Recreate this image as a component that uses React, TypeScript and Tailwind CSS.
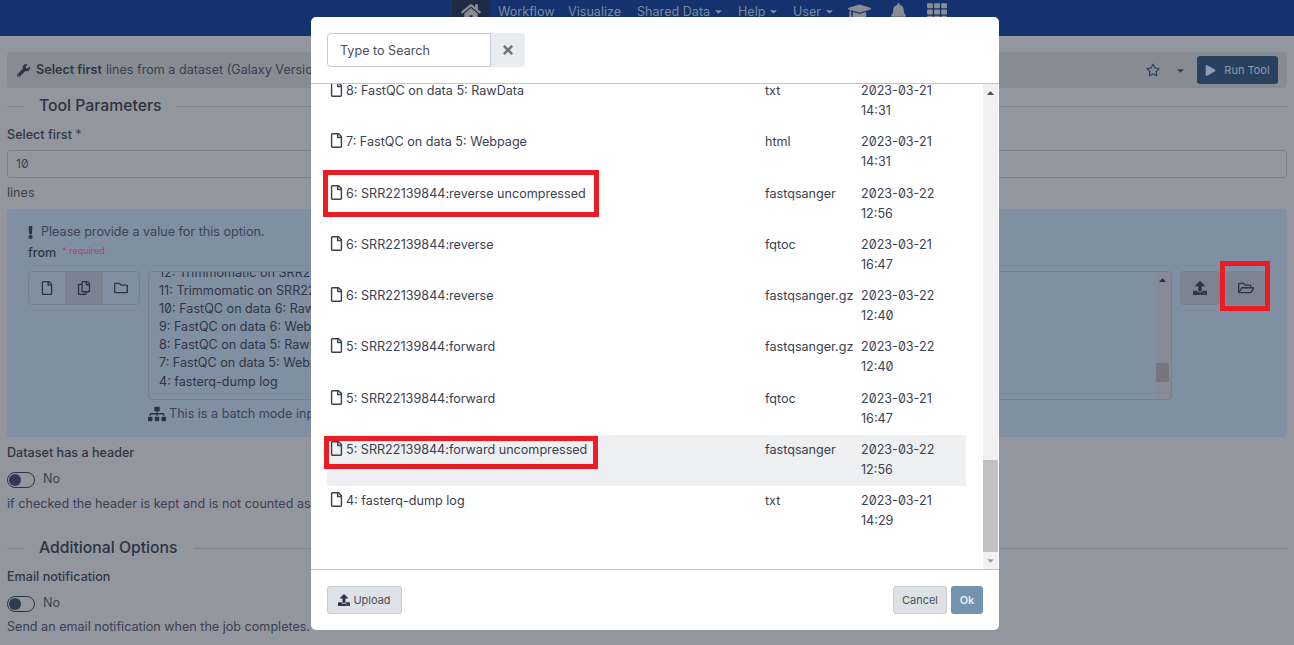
import React from 'react';
import {
    FaBell, FaCaretDown, FaExclamation, FaGraduationCap, FaHome, FaPlay, FaRegCopy, FaRegFile,
    FaRegFolder, FaRegFolderOpen, FaRegStar, FaSitemap, FaTh, FaTimes, FaUpload, FaWrench,
} from 'react-icons/fa';

const rows = [
    { name: '8: FastQC on data 5: RawData', format: 'txt', date: '2023-03-21 14:31' },
    { name: '7: FastQC on data 5: Webpage', format: 'html', date: '2023-03-21 14:31' },
    { name: '6: SRR22139844:reverse uncompressed', format: 'fastqsanger', date: '2023-03-22 12:56' },
    { name: '6: SRR22139844:reverse', format: 'fqtoc', date: '2023-03-21 16:47' },
    { name: '6: SRR22139844:reverse', format: 'fastqsanger.gz', date: '2023-03-22 12:40' },
    { name: '5: SRR22139844:forward', format: 'fastqsanger.gz', date: '2023-03-22 12:40' },
    { name: '5: SRR22139844:forward', format: 'fqtoc', date: '2023-03-21 16:47' },
    { name: '5: SRR22139844:forward uncompressed', format: 'fastqsanger', date: '2023-03-22 12:56', active: true },
    { name: '4: fasterq-dump log', format: 'txt', date: '2023-03-21 14:29' },
];

const batchLines = [
    '12: Trimmomatic on SRR22139844',
    '11: Trimmomatic on SRR22139844',
    '10: FastQC on data 6: RawData',
    '9: FastQC on data 6: Webpage',
    '8: FastQC on data 5: RawData',
    '7: FastQC on data 5: Webpage',
    '4: fasterq-dump log',
];

function NavCaret({ label }: { label: string }) {
    return (
        <span className="flex items-center gap-[3px]">
            {label}
            <FaCaretDown size={11} />
        </span>
    );
}

function SectionTitle({ title }: { title: string }) {
    return (
        <div className="flex items-center h-[24px]">
            <div className="w-[16px] h-px bg-[#7f8290]" />
            <h2 className="mx-[16px] text-[15.75px] font-medium text-[#2b3442]">{title}</h2>
            <div className="flex-1 h-px bg-[#7f8290]" />
        </div>
    );
}

function Toggle() {
    return (
        <div className="flex items-center gap-[8px] h-[16px]">
            <div className="w-[28px] h-[16px] rounded-full border border-[#2b3442] p-[1px]">
                <div className="w-[12px] h-[12px] rounded-full bg-[#2f3a50]" />
            </div>
            <span className="text-[#3a3f52] -mt-[2px]">No</span>
        </div>
    );
}

export default function App() {
    return (
        <div className="relative h-[645px] overflow-hidden bg-[#94969f] slashed-zero text-[12.6px] leading-[20px] text-[#2f3645] font-['Inter',sans-serif]">
            {/* Masthead, sits under the modal */}
            <div className="flex h-[36px] bg-[#14326e] pl-[452px] text-[#7f8a9f]">
                <div className="flex w-[38px] h-[17px] justify-center bg-[#1f2b44] pt-[2px] text-[#8a8c92]">
                    <FaHome size={20} className="shrink-0" />
                </div>
                <div className="flex h-[17px] items-center pl-[8px] pt-[6px]">
                    <span className="w-[70px]">Workflow</span>
                    <span className="w-[69px]">Visualize</span>
                    <span className="w-[101px]"><NavCaret label="Shared Data" /></span>
                    <span className="w-[55px]"><NavCaret label="Help" /></span>
                    <span className="w-[55px]"><NavCaret label="User" /></span>
                    <FaGraduationCap size={23} className="mr-[19px] shrink-0 text-[#8a8c92]" />
                    <FaBell size={17} className="mr-[20px] shrink-0 text-[#8a8c92]" />
                    <FaTh size={20} className="shrink-0 text-[#8a8c92]" />
                </div>
            </div>

            <div className="px-[7px] pt-[16px]">
                {/* Tool header */}
                <div className="flex h-[36px] items-center rounded-[4px] bg-[#878b94] pl-[10px] pr-[9px]">
                    <FaWrench size={13} className="mr-[6px] text-[#2b3442]" />
                    <b className="font-semibold mr-[4px]">Select first</b>
                    <span className="text-[#3a3f52]">lines from a dataset (Galaxy Version 1.0.2)</span>
                    <div className="flex-1" />
                    <FaRegStar size={14} className="text-[#29415f]" />
                    <FaCaretDown size={11} className="ml-[15px] mr-[11px] text-[#29415f]" />
                    <div className="flex h-[28px] w-[81px] items-center justify-center gap-[8px] rounded-[3px] bg-[#29415f] text-[11px] text-[#8f9bb0]">
                        <FaPlay size={11} />
                        Run Tool
                    </div>
                </div>

                <div className="mt-[6px]"><SectionTitle title="Tool Parameters" /></div>

                <div className="mt-[7px] font-medium">Select first <span className="text-[#3a3f52] font-normal">*</span></div>
                <div className="mt-[5px] flex h-[28px] items-center rounded-[3px] border border-[#7b7e90] px-[8px] text-[12px] text-[#3a3f52]">10</div>
                <div className="mt-[5px] text-[#3a3f52]">lines</div>

                {/* Input dataset block */}
                <div className="mt-[6px] h-[228px] rounded-[4px] bg-[#818fa2] px-[21px] pt-[13px]">
                    <div className="flex items-center text-[#3a4458]">
                        <FaExclamation size={13} className="-ml-[4px] mr-[4px] text-[#2b3442]" />
                        Please provide a value for this option.
                    </div>
                    <div className="-mt-px flex items-center">
                        <span className="font-medium">from</span>
                        <span className="ml-[6px] pb-[3px] text-[9px] text-[#a04a60]">* required</span>
                    </div>
                    <div className="mt-[7px] flex items-start gap-[8px]">
                        <div className="flex h-[34px] w-[112px] rounded-[4px] border border-[#757f92] text-[#2b3442]">
                            <div className="flex flex-1 items-center justify-center"><FaRegFile size={14} /></div>
                            <div className="flex flex-1 items-center justify-center border-x border-[#757f92] bg-[#7b8392]"><FaRegCopy size={14} /></div>
                            <div className="flex flex-1 items-center justify-center"><FaRegFolder size={14} /></div>
                        </div>
                        <div className="flex flex-1 flex-col">
                            <div className="relative h-[129px] overflow-hidden rounded-[4px] border border-[#757f92] pl-[10px] text-[#2f3645] leading-[18.1px]">
                                <div className="-mt-[8px] flex flex-col">
                                    {batchLines.map((line, i) => <span key={i}>{line}</span>)}
                                </div>
                                <div className="absolute right-0 top-0 flex h-full w-[17px] flex-col items-center bg-[#878b97]">
                                    <FaCaretDown size={11} className="mt-[3px] rotate-180 text-[#2b3442]" />
                                    <div className="mt-[77px] h-[19px] w-[13px] bg-[#747682]" />
                                </div>
                            </div>
                            <div className="mt-[4px] flex items-center gap-[3px] text-[#3a4458]">
                                <FaSitemap size={18} className="text-[#2b3442]" />
                                This is a batch mode input field. Separate jobs will be triggered for each dataset selection.
                            </div>
                        </div>
                        <div className="flex gap-[6px]">
                            <div className="flex h-[34px] w-[40px] items-center justify-center rounded-[4px] border border-[#757f92] bg-[#7c8492] text-[#2b3442]"><FaUpload size={14} /></div>
                            <div className="flex h-[34px] w-[40px] items-center justify-center rounded-[4px] bg-[#7c8492] text-[#2b3442]"><FaRegFolderOpen size={16} /></div>
                        </div>
                    </div>
                </div>

                <div className="mt-[6px] font-medium">Dataset has a header</div>
                <div className="mt-[9px]"><Toggle /></div>
                <div className="mt-[6px] text-[#3a3f52]">if checked the header is kept and is not counted as a line</div>

                <div className="mt-[22px]"><SectionTitle title="Additional Options" /></div>

                <div className="mt-[7px] font-medium">Email notification</div>
                <div className="mt-[9px]"><Toggle /></div>
                <div className="mt-[5px] text-[#3a3f52]">Send an email notification when the job completes.</div>
            </div>

            {/* Dataset picker modal */}
            <div className="absolute left-[311px] top-[17px] flex h-[613px] w-[688px] flex-col rounded-[5px] bg-white">
                <div className="flex h-[67px] shrink-0 items-start border-b border-[#c0c4cb] pl-[16px] pt-[16px]">
                    <div className="flex h-[34px] w-[164px] items-center rounded-l-[4px] border border-[#c5cad3] pl-[12px] pt-px text-[#495057]">Type to Search</div>
                    <div className="flex h-[34px] w-[34px] items-center justify-center rounded-r-[4px] bg-[#e9ecef] text-[#6c757d]">
                        <FaTimes size={14} />
                    </div>
                </div>

                <div className="relative flex-1 overflow-hidden">
                    <div className="-mt-[8px] mr-[33px] pl-[16px] text-[#3a4252]">
                        {rows.map((row, i) => (
                            <div key={i} className={`flex h-[51.3px] py-[5px] ${row.active ? 'bg-[#eeeff1]' : ''}`}>
                                <div className="flex w-[434px] items-start pl-[2px]">
                                    <FaRegFile size={15} className="mr-[2px] mt-[1px] shrink-0" />
                                    <span>{row.name}</span>
                                </div>
                                <div className="w-[96px] pl-[4px]">{row.format}</div>
                                <div className="w-[100px] pl-[4px]">{row.date}</div>
                            </div>
                        ))}
                    </div>
                    <div className="absolute right-[1px] top-0 flex h-full w-[15px] flex-col items-center bg-[#f1f1f1]">
                        <FaCaretDown size={11} className="mt-[4px] rotate-180 text-[#505050]" />
                        <div className="absolute top-[376px] h-[92px] w-[15px] bg-[#c1c1c1]" />
                        <FaCaretDown size={11} className="absolute bottom-[3px] text-[#a3a3a3]" />
                    </div>
                </div>

                <div className="flex h-[61px] shrink-0 items-start justify-between border-t border-[#c0c4cb] px-[16px] pt-[16px]">
                    <div className="flex h-[28px] w-[75px] items-center justify-center gap-[3px] rounded-[3px] border border-[#c5cad3] bg-[#dee2e6] text-[11px] text-[#495057]">
                        <FaUpload size={12} className="text-[#2f3645]" />
                        Upload
                    </div>
                    <div className="flex gap-[4px]">
                        <div className="flex h-[28px] w-[54px] items-center justify-center rounded-[3px] border border-[#c5cad3] bg-[#dee2e6] text-[11px] text-[#495057]">Cancel</div>
                        <div className="flex h-[28px] w-[32px] items-center justify-center rounded-[3px] bg-[#7393ae] text-[11px] font-semibold text-[#e8edf2]">Ok</div>
                    </div>
                </div>
            </div>

            {/* Red annotation boxes drawn on top of the screenshot */}
            <div className="absolute left-[323px] top-[170px] h-[47px] w-[276px] border-[5px] border-[#ed1c24]" />
            <div className="absolute left-[324px] top-[436px] h-[33px] w-[274px] border-[5px] border-[#ed1c24]" />
            <div className="absolute left-[1220px] top-[261px] h-[50px] w-[50px] border-[5px] border-[#ed1c24]" />
        </div>
    );
}
